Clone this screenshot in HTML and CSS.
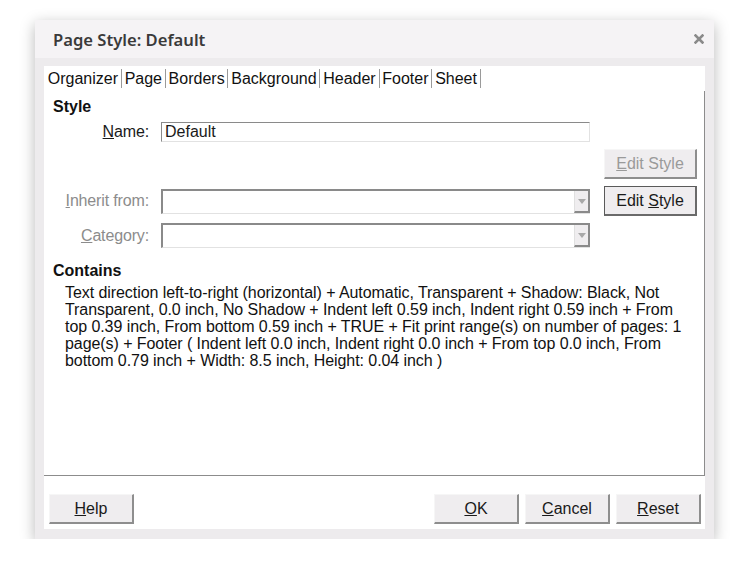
FILE: index.html
```html
<!DOCTYPE html>
<html lang="en">
<head>
  <meta charset="UTF-8" />
  <title>Page Style: Default</title>
  <link rel="stylesheet" href="styles.css">
</head>
<body>
  <div class="dialog">
    <div class="titlebar">
      <span class="title">Page Style: Default</span>
      <svg class="close" width="10" height="10" viewBox="0 0 10 10">
        <path d="M1.5 1.5 L8.5 8.5 M8.5 1.5 L1.5 8.5" stroke="#8a8a8a" stroke-width="2.6" stroke-linecap="square"/>
      </svg>
    </div>
    <div class="frame">
      <div class="panel">
        <div class="tabs">
          <span class="tab">Organizer</span>
          <span class="tab">Page</span>
          <span class="tab">Borders</span>
          <span class="tab">Background</span>
          <span class="tab">Header</span>
          <span class="tab">Footer</span>
          <span class="tab">Sheet</span>
        </div>
        <div class="page">
          <h3 class="section">Style</h3>
          <div class="form">
            <label class="lbl"><u>N</u>ame:</label>
            <div class="entry">Default</div>
            <div></div>

            <div></div>
            <div></div>
            <button class="btn disabled"><u>E</u>dit Style</button>

            <label class="lbl dim"><u>I</u>nherit from:</label>
            <div class="combo"><span class="drop"></span></div>
            <button class="btn focus">Edit <u>S</u>tyle</button>

            <label class="lbl dim"><u>C</u>ategory:</label>
            <div class="combo"><span class="drop"></span></div>
            <div></div>
          </div>
          <h3 class="section contains-title">Contains</h3>
          <p class="contains">Text direction left-to-right (horizontal) + Automatic, Transparent + Shadow: Black, Not<br>Transparent, 0.0 inch, No Shadow + Indent left 0.59 inch, Indent right 0.59 inch + From<br>top 0.39 inch, From bottom 0.59 inch + TRUE + Fit print range(s) on number of pages: 1<br>page(s) + Footer ( Indent left 0.0 inch, Indent right 0.0 inch + From top 0.0 inch, From<br>bottom 0.79 inch + Width: 8.5 inch, Height: 0.04 inch )</p>
        </div>
        <div class="actions">
          <button class="btn"><u>H</u>elp</button>
          <div class="spacer"></div>
          <button class="btn"><u>O</u>K</button>
          <button class="btn"><u>C</u>ancel</button>
          <button class="btn"><u>R</u>eset</button>
        </div>
      </div>
    </div>
  </div>
</body>
</html>
```

FILE: styles.css
```css
body {
  margin: 0;
  background: #ffffff;
  font-family: "Liberation Sans", Arial, sans-serif;
  font-size: 16px;
  color: #1a1a1a;
}
.dialog {
  width: 679px;
  height: 519px;
  margin: 20px 0 0 35px;
  display: flex;
  flex-direction: column;
  box-shadow: 0 4px 14px rgba(0,0,0,0.28);
}
.titlebar {
  height: 38px;
  flex: none;
  background: #f5f3f5;
  display: flex;
  align-items: center;
  padding: 0 10px 0 18px;
}
.title {
  font-family: "Noto Sans", sans-serif;
  font-weight: 600;
  font-size: 16.6px;
  color: #3a3a3a;
  flex: 1;
}
.frame {
  flex: 1;
  background: #edebed;
  padding: 8px 9px 10px 9px;
  display: flex;
}
.panel {
  flex: 1;
  min-width: 0;
  background: #ffffff;
  display: flex;
  flex-direction: column;
}
.tabs {
  height: 25px;
  display: flex;
  align-items: flex-start;
  padding: 3px 0 0 1px;
  box-sizing: border-box;
}
.tab {
  padding: 0 2.8px 0 2.8px;
  line-height: 19px;
  border-right: 1px solid #9a9a9a;
  color: #111;
}
.page {
  flex: 1;
  border-right: 1px solid #8c8c8c;
  border-bottom: 1px solid #8c8c8c;
  padding: 6px 6px 0 9px;
}
.section {
  margin: 0;
  font-size: 16px;
  font-weight: bold;
  line-height: 19px;
  color: #111;
}
.form {
  display: grid;
  grid-template-columns: 96px 429px 95px;
  grid-template-rows: 20px 30px 30px 25px;
  column-gap: 12px;
  row-gap: 7px;
  margin-top: 6px;
  align-items: center;
}
.lbl {
  text-align: right;
  letter-spacing: -0.15px;
  color: #1a1a1a;
}
.lbl.dim {
  color: #8c8c8c;
}
.entry {
  height: 20px;
  box-sizing: border-box;
  border-top: 1px solid #8a8a8a;
  border-left: 1px solid #8a8a8a;
  border-right: 1px solid #e2e2e2;
  border-bottom: 1px solid #e2e2e2;
  padding: 0 3px;
  line-height: 18px;
}
.combo {
  height: 25px;
  box-sizing: border-box;
  border-top: 2px solid #8a8a8a;
  border-left: 2px solid #8a8a8a;
  border-bottom: 1px solid #e2e2e2;
  display: flex;
  justify-content: flex-end;
}
.drop {
  width: 16px;
  box-sizing: border-box;
  background: #efedef;
  border-left: 1px solid #e0e0e0;
  border-right: 2px solid #8a8a8a;
  border-bottom: 2px solid #8a8a8a;
  position: relative;
}
.drop::after {
  content: "";
  position: absolute;
  left: 3px;
  top: 8px;
  border-left: 4px solid transparent;
  border-right: 4px solid transparent;
  border-top: 5px solid #a8a8a8;
}
.btn {
  height: 30px;
  width: 85px;
  box-sizing: border-box;
  background: #efedef;
  font-family: "Liberation Sans", Arial, sans-serif;
  font-size: 16px;
  color: #1a1a1a;
  border-top: 1px solid #f6f6f6;
  border-left: 1px solid #f6f6f6;
  border-right: 2px solid #8e8e8e;
  border-bottom: 2px solid #8e8e8e;
  padding: 0;
}
.form .btn {
  width: 93px;
  margin-left: 2px;
}
.btn.disabled {
  color: #9a9a9a;
}
.btn.focus {
  border-top: 1px solid #5a5a5a;
  border-left: 1px solid #5a5a5a;
  border-right: 2px solid #6a6a6a;
  border-bottom: 2px solid #6a6a6a;
}
.contains-title {
  margin-top: 13px;
}
.contains {
  margin: 4px 0 0 12px;
  line-height: 17px;
  letter-spacing: -0.07px;
  color: #111;
}
.actions {
  height: 53px;
  display: flex;
  align-items: flex-start;
  gap: 6px;
  padding: 18px 4px 0 5px;
  box-sizing: border-box;
}
.spacer {
  flex: 1;
}
```
